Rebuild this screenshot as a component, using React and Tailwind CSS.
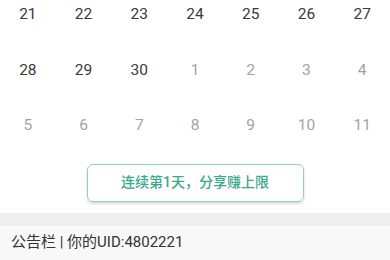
export default function App() {
  const rows = [
    [[21, 1], [22, 1], [23, 1], [24, 1], [25, 1], [26, 1], [27, 1]],
    [[28, 1], [29, 1], [30, 1], [1, 0], [2, 0], [3, 0], [4, 0]],
    [[5, 0], [6, 0], [7, 0], [8, 0], [9, 0], [10, 0], [11, 0]],
  ];
  return (
    <div className="w-[390px] h-[260px] overflow-hidden bg-white" style={{ fontFamily: 'Roboto, "Noto Sans CJK SC", sans-serif' }}>
      <div className="-mt-[13px]">
        {rows.map((r, i) => (
          <div key={i} className="grid grid-cols-7 h-[55.5px] items-center">
            {r.map(([n, cur], j) => (
              <div key={j} className={`text-center text-[15.5px] ${cur ? "text-[#3a3a3a]" : "text-[#a3a3a3]"}`}>{n}</div>
            ))}
          </div>
        ))}
      </div>
      <div className="flex justify-center pt-[10px] pb-[11px]">
        <div className="w-[217px] h-[38px] rounded-[6px] border border-[#8ed3bf] flex items-center justify-center text-[14px] font-medium text-[#3aa88a] shadow-[0_2px_3px_rgba(0,0,0,0.15)]">
          连续第1天，分享赚上限
        </div>
      </div>
      <div className="h-[13px] bg-[#eeeeee]"></div>
      <div className="h-[34px] bg-[#f8f8f8] flex items-center px-[11px] text-[15px] text-[#333333]">
        公告栏 | 你的UID:4802221
      </div>
    </div>
  );
}
